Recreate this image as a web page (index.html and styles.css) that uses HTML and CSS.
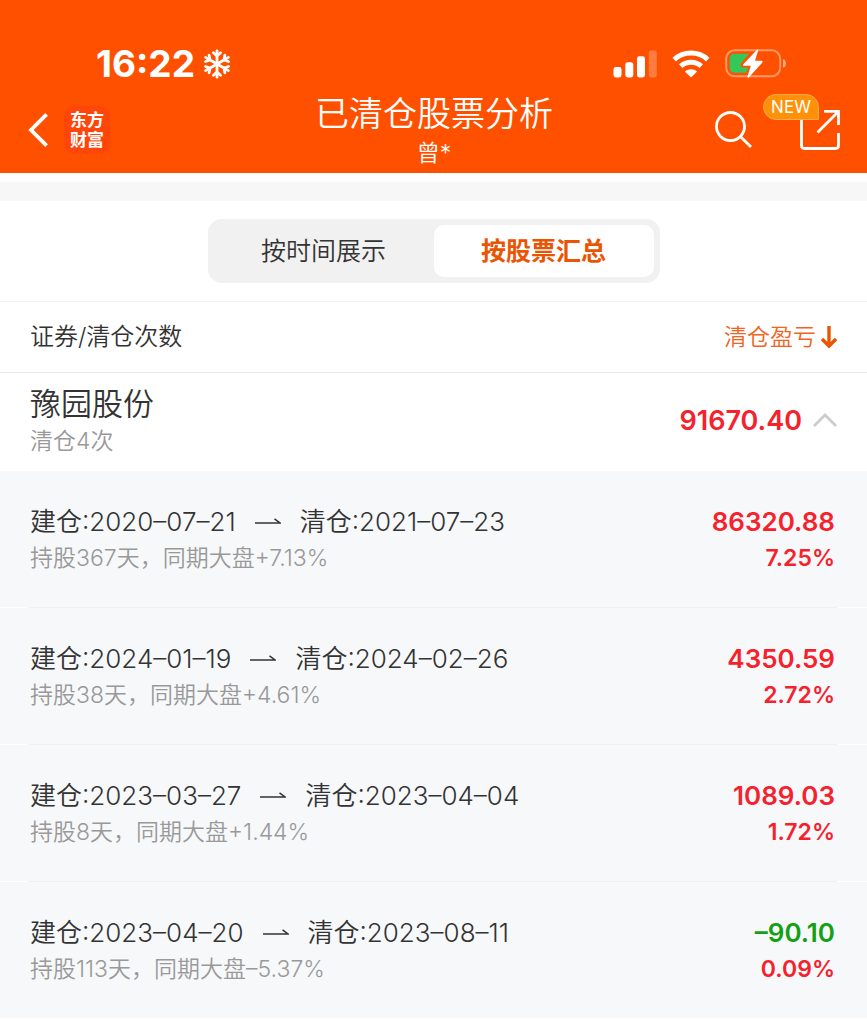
FILE: index.html
```
<!DOCTYPE html>
<html lang="zh-CN">
  <head>
    <meta charset="UTF-8" />
    <meta name="viewport" content="width=device-width, initial-scale=1.0" />
    <title>已清仓股票分析</title>
    <link rel="stylesheet" href="styles.css">
  </head>
  <body>
    <header class="header">
      <!-- Status bar -->
      <div class="status">
        <div class="status-left">
          <span class="time">16:22</span>
          <svg class="snow" width="28" height="30" viewBox="0 0 28 30" fill="none" stroke="#fff" stroke-width="2.8" stroke-linecap="round" stroke-linejoin="round">
            <g id="arm">
              <path d="M14 15V1.8M10.4 3.8L14 7L17.6 3.8" />
            </g>
            <use href="#arm" transform="rotate(60 14 15)" />
            <use href="#arm" transform="rotate(120 14 15)" />
            <use href="#arm" transform="rotate(180 14 15)" />
            <use href="#arm" transform="rotate(240 14 15)" />
            <use href="#arm" transform="rotate(300 14 15)" />
          </svg>
        </div>
        <div class="status-right">
          <svg width="44" height="28" viewBox="0 0 44 28" fill="#fff">
            <rect x="0.5" y="17" width="8" height="10.5" rx="2.4" />
            <rect x="12.3" y="12.3" width="8" height="15.2" rx="2.4" />
            <rect x="24" y="6.3" width="8" height="21.2" rx="2.4" />
            <rect x="35.8" y="0.5" width="8" height="27" rx="2.4" opacity="0.25" />
          </svg>
          <svg width="38" height="28" viewBox="0 0 38 28" fill="none" stroke="#fff" stroke-width="5">
            <path d="M2.2 9.6C11.5 .9 26.5 .9 35.8 9.6" />
            <path d="M8.7 16.2C14.5 10.9 23.5 10.9 29.3 16.2" />
            <path d="M12.9 21.4C16.4 18.4 21.6 18.4 25.1 21.4L19.8 26.8Q19 27.6 18.2 26.8Z" fill="#fff" stroke="none" />
          </svg>
          <svg width="62" height="30" viewBox="0 0 62 30">
            <rect x="1.2" y="1.2" width="54" height="26" rx="8.5" fill="none" stroke="#fff" stroke-opacity="0.42" stroke-width="2" />
            <path d="M58 10.2C62 11.2 62 17.8 58 18.8Z" fill="#fff" fill-opacity="0.5" />
            <path d="M10 4.8H24L16 14.6Q14.6 17.2 17.4 18.4H23.2L21.4 23.8H10Q4.6 23.8 4.6 18.4V10.2Q4.6 4.8 10 4.8Z" fill="#34c759" />
            <path d="M32 .8L18.3 15.2Q17.2 16.8 19 16.8H25.8L22.4 27.8Q22.6 29.4 23.8 28.4L37.4 13.4Q38.3 11.8 36.6 11.8H30L33.2 1.6Q33.2 0 32 .8Z" fill="#fff" />
          </svg>
        </div>
      </div>

      <!-- Title bar -->
      <nav class="nav">
        <div class="nav-left">
          <button class="icon-btn" aria-label="返回">
            <svg width="20" height="34" viewBox="0 0 20 34" fill="none" stroke="#fff" stroke-width="3.8">
              <path d="M18.6 1.4L3 17L18.6 32.6" />
            </svg>
          </button>
          <a class="logo" href="#">东方<br>财富</a>
        </div>
        <div class="nav-title">
          <h1>已清仓股票分析</h1>
          <p>曾*</p>
        </div>
        <div class="nav-right">
          <button class="icon-btn" aria-label="搜索">
            <svg width="38" height="38" viewBox="0 0 38 38" fill="none" stroke="#fff" stroke-width="2.8">
              <circle cx="15.5" cy="15.5" r="14" />
              <path d="M25.4 25.4L36 36" />
            </svg>
          </button>
          <button class="icon-btn share" aria-label="分享">
            <svg width="40" height="40" viewBox="0 0 40 40" fill="none" stroke="#fff" stroke-width="2.8">
              <path d="M1.5 10V35.5Q1.5 38.5 4.500 38.5H35.5Q38.5 38.5 38.5 35.5V23" />
              <path d="M24 1.4H38.5V15M38 2L17.5 22.6" />
            </svg>
            <span class="badge">NEW</span>
          </button>
        </div>
      </nav>
    </header>

    <div class="spacer"></div>

    <!-- Tabs -->
    <div class="tabs-wrap">
      <div class="tabs">
        <button class="tab">按时间展示</button>
        <button class="tab active">按股票汇总</button>
      </div>
    </div>

    <main>
      <div class="list-head">
        <span>证券/清仓次数</span>
        <button class="sort">
          清仓盈亏
          <svg width="16" height="24" viewBox="0 0 16 24" fill="none" stroke="#ea5504" stroke-width="3.4">
            <path d="M8 1V21M1 14L8 21L15 14" />
          </svg>
        </button>
      </div>

      <button class="stock">
        <span class="stock-info">
          <span class="stock-name">豫园股份</span>
          <span class="stock-count">清仓4次</span>
        </span>
        <span class="stock-total">91670.40</span>
        <svg width="24" height="16" viewBox="0 0 24 16" fill="none" stroke="#ccc" stroke-width="2.8">
          <path d="M1 14L12 3L23 14" />
        </svg>
      </button>

      <ul class="trades">
        <li class="trade">
          <div class="trade-info">
            <p class="dates">建仓:2020–07–21
              <svg class="arrow" width="26" height="8" viewBox="0 0 26 8"><path d="M0 5H25L19.5 .8" /></svg>
              清仓:2021–07–23</p>
            <p class="note">持股367天，同期大盘+7.13%</p>
          </div>
          <div class="profit up">
            <p class="amount">86320.88</p>
            <p class="rate">7.25%</p>
          </div>
        </li>
        <li class="trade">
          <div class="trade-info">
            <p class="dates">建仓:2024–01–19
              <svg class="arrow" width="26" height="8" viewBox="0 0 26 8"><path d="M0 5H25L19.5 .8" /></svg>
              清仓:2024–02–26</p>
            <p class="note">持股38天，同期大盘+4.61%</p>
          </div>
          <div class="profit up">
            <p class="amount">4350.59</p>
            <p class="rate">2.72%</p>
          </div>
        </li>
        <li class="trade">
          <div class="trade-info">
            <p class="dates">建仓:2023–03–27
              <svg class="arrow" width="26" height="8" viewBox="0 0 26 8"><path d="M0 5H25L19.5 .8" /></svg>
              清仓:2023–04–04</p>
            <p class="note">持股8天，同期大盘+1.44%</p>
          </div>
          <div class="profit up">
            <p class="amount">1089.03</p>
            <p class="rate">1.72%</p>
          </div>
        </li>
        <li class="trade">
          <div class="trade-info">
            <p class="dates">建仓:2023–04–20
              <svg class="arrow" width="26" height="8" viewBox="0 0 26 8"><path d="M0 5H25L19.5 .8" /></svg>
              清仓:2023–08–11</p>
            <p class="note">持股113天，同期大盘–5.37%</p>
          </div>
          <div class="profit">
            <p class="amount down">–90.10</p>
            <p class="rate up">0.09%</p>
          </div>
        </li>
      </ul>
    </main>
  </body>
</html>
```
FILE: styles.css
```
* {
  box-sizing: border-box;
}

body {
  margin: 0;
  background: #fff;
  color: #333;
  font-family: Inter, "Noto Sans CJK SC", sans-serif;
  font-weight: 350;
}

h1,
p,
ul {
  margin: 0;
  padding: 0;
}

button {
  padding: 0;
  border: none;
  background: none;
  color: inherit;
  font-family: inherit;
  font-weight: inherit;
  cursor: pointer;
}

svg {
  display: block;
  flex-shrink: 0;
}

/* Header */
.header {
  padding: 36px 0 4px;
  background: #ff5000;
  color: #fff;
}

.status {
  display: flex;
  justify-content: space-between;
  align-items: center;
  height: 55px;
  padding: 0 80px 0 96px;
}

.status-left {
  display: flex;
  align-items: center;
  gap: 8px;
}

.time {
  font-size: 37px;
  font-weight: 700;
  line-height: 40px;
}

.status-right {
  display: flex;
  align-items: center;
  gap: 15px;
}

.nav {
  display: grid;
  grid-template-columns: 1fr auto 1fr;
  align-items: center;
  padding: 0 27px 0 28px;
}

.nav-left {
  display: flex;
  align-items: center;
  gap: 16px;
}

.logo {
  width: 46px;
  padding: 4px 0;
  border-radius: 10px;
  background: #ff460a;
  color: #fff;
  font-size: 17px;
  font-weight: 700;
  line-height: 20px;
  text-align: center;
  text-decoration: none;
}

.nav-title {
  text-align: center;
}

.nav-title h1 {
  font-size: 34px;
  font-weight: 350;
  line-height: 46px;
}

.nav-title p {
  font-size: 23px;
  line-height: 32px;
}

.nav-right {
  display: flex;
  justify-content: flex-end;
  align-items: center;
  gap: 47px;
}

.share {
  position: relative;
}

.badge {
  position: absolute;
  right: 21px;
  bottom: 30px;
  width: 56px;
  border: 1px solid #ffab4a;
  border-radius: 13px 13px 0 13px;
  background: #ff9109;
  color: #fff;
  font-size: 17px;
  font-weight: 400;
  line-height: 24px;
  text-align: center;
}

.spacer {
  height: 19px;
  margin-top: 9px;
  background: #f7f7f7;
}

/* Tabs */
.tabs-wrap {
  display: flex;
  justify-content: center;
  padding: 18px 0;
  border-bottom: 1px solid #f2f2f2;
}

.tabs {
  display: flex;
  padding: 6px;
  border-radius: 14px;
  background: #f1f1f1;
}

.tab {
  width: 220px;
  border-radius: 10px;
  font-size: 25px;
  line-height: 52px;
}

.tab.active {
  background: #fff;
  color: #ea5504;
  font-weight: 700;
}

/* Stock list */
.list-head {
  display: flex;
  justify-content: space-between;
  align-items: center;
  padding: 0 30px;
  border-bottom: 1px solid #e8e8e8;
  font-size: 24px;
  line-height: 70px;
}

.sort {
  display: flex;
  align-items: center;
  gap: 5px;
  color: #f0641e;
  font-size: 23px;
  line-height: inherit;
}

.stock {
  display: flex;
  align-items: center;
  width: 100%;
  padding: 10px 30px 14px;
  text-align: left;
}

.stock-info {
  display: flex;
  flex: 1;
  flex-direction: column;
}

.stock-name {
  font-size: 31px;
  line-height: 42px;
}

.stock-count {
  color: #999;
  font-size: 23px;
  line-height: 32px;
}

.stock-total {
  margin-right: 11px;
  color: #f5222d;
  font-size: 27px;
  font-weight: 600;
}

.trades {
  list-style: none;
}

.trade {
  position: relative;
  display: flex;
  justify-content: space-between;
  padding: 33px 32px 31px 30px;
  border-bottom: 1px solid #fff;
  background: #f7f8fa;
}

.trade:last-child {
  border-bottom: none;
}

.trade:not(:last-child)::after {
  content: "";
  position: absolute;
  right: 30px;
  bottom: -1px;
  left: 28px;
  height: 1px;
  background: #f0f0f1;
}

.dates {
  display: flex;
  align-items: center;
  gap: 14px;
  font-size: 26px;
  line-height: 36px;
}

.arrow {
  margin: 0 5px;
  fill: none;
  stroke: #333;
  stroke-width: 1.5;
}

.note {
  color: #999;
  font-size: 23px;
  line-height: 36px;
}

.profit {
  font-weight: 600;
  line-height: 36px;
  text-align: right;
}

.amount {
  font-size: 26px;
}

.rate {
  font-size: 23px;
}

.up {
  color: #f5222d;
}

.down {
  color: #14a014;
}
```
